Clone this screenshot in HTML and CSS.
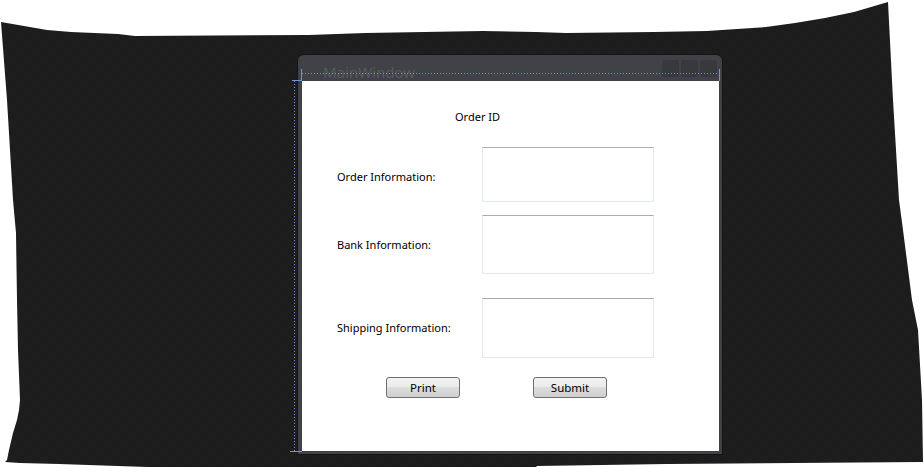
FILE: index.html
```html
<!DOCTYPE html>
<html>
<head>
<meta charset="utf-8">
<title>MainWindow</title>
<link rel="stylesheet" href="styles.css">
</head>
<body>
<div class="stage">
  <svg class="backdrop" width="924" height="467" viewBox="0 0 924 467">
    <defs>
      <pattern id="chk" width="16" height="16" patternUnits="userSpaceOnUse">
        <rect width="16" height="16" fill="#1c1c1c"/>
        <rect width="8" height="8" fill="#1e1e1e"/>
        <rect x="8" y="8" width="8" height="8" fill="#1e1e1e"/>
      </pattern>
    </defs>
    <polygon fill="url(#chk)" points="1,22 47,30 71,32 118,34 135,36 309,35 365,33 424,32 483,31 536,32 566,33 654,32 707,31 737,29 766,27 795,23 825,18 854,12 888,2 893,100 899,200 903,230 912,300 918,330 922,400 923,462 795,463 667,464 602,465 537,466 536,467 147,467 59,464 20,463 5,462 7,460 9,450 13,433 17,420 19,410 20,400 18,350 17,300 16,233 13,200 7,100"/>
  </svg>

  <div class="window">
    <div class="titlebar">
      <span class="title">MainWindow</span>
      <div class="caption-btns">
        <span class="cap"></span><span class="cap"></span><span class="cap"></span>
      </div>
    </div>
    <div class="client">
      <div class="order-id">Order ID</div>
      <div class="row row-order">
        <span class="label label-order">Order Information:</span>
        <div class="textbox tb-order"></div>
      </div>
      <div class="row row-bank">
        <span class="label">Bank Information:</span>
        <div class="textbox tb-bank"></div>
      </div>
      <div class="row row-ship">
        <span class="label">Shipping Information:</span>
        <div class="textbox tb-ship"></div>
      </div>
      <div class="buttons">
        <button class="btn btn-print">Print</button>
        <button class="btn btn-submit">Submit</button>
      </div>
    </div>
  </div>

  <div class="guide g-top-dotted"></div>
  <div class="guide g-tick-left"></div>
  <div class="guide g-tick-right"></div>
  <div class="guide g-left-top"></div>
  <div class="guide g-left-dotted"></div>
  <div class="guide g-left-bottom"></div>
</div>
</body>
</html>
```

FILE: styles.css
```css
html, body {
  margin: 0;
  padding: 0;
  background: #ffffff;
}

.stage {
  position: relative;
  width: 924px;
  height: 467px;
  overflow: hidden;
  box-sizing: border-box;
  padding: 54px 0 0 297px;
  font-family: "Noto Sans", "Open Sans", sans-serif;
}

.backdrop {
  position: absolute;
  left: 0;
  top: 0;
}

.window {
  position: relative;
  z-index: 1;
  width: 426px;
  height: 401px;
  box-sizing: border-box;
  border: 1px solid #141414;
  border-radius: 7px 7px 0 0;
  background: #414247;
  padding: 0 3px 3px 4px;
  display: flex;
  flex-direction: column;
}

.titlebar {
  height: 26px;
  flex: none;
  display: flex;
  align-items: flex-start;
  overflow: hidden;
}

.title {
  padding-left: 21px;
  padding-top: 7px;
  font-size: 15px;
  line-height: 20px;
  color: #58595e;
  font-family: "Noto Sans", sans-serif;
}

.caption-btns {
  margin-left: auto;
  margin-right: 2px;
  margin-top: 5px;
  display: flex;
  gap: 2px;
}

.cap {
  display: block;
  width: 17px;
  height: 17px;
  border-radius: 3px;
  background: #38393d;
}

.client {
  flex: 1;
  background: #ffffff;
  padding-left: 35px;
  color: #000000;
  font-size: 11px;
  display: flex;
  flex-direction: column;
  align-items: flex-start;
}

.order-id {
  margin-top: 28px;
  margin-left: 118px;
  line-height: 16px;
}

.row {
  display: flex;
  align-items: center;
}

.row-order { margin-top: 22px; }
.row-bank { margin-top: 13px; }
.row-ship { margin-top: 24px; }

.label {
  width: 145px;
  line-height: 16px;
}

.label-order {
  padding-top: 5px;
}

.textbox {
  width: 172px;
  box-sizing: border-box;
  border: 1px solid #e3e9ef;
  border-top-color: #abadb3;
  background: #ffffff;
}

.tb-order { height: 55px; }
.tb-bank { height: 59px; }
.tb-ship { height: 60px; }

.buttons {
  margin-top: 19px;
  display: flex;
}

.btn {
  width: 74px;
  height: 21px;
  box-sizing: border-box;
  border: 1px solid #707070;
  border-radius: 3px;
  background: linear-gradient(#f2f2f2 0%, #ebebeb 50%, #dddddd 50%, #cfcfcf 100%);
  font-family: "Noto Sans", "Open Sans", sans-serif;
  font-size: 11.5px;
  color: #000000;
  padding: 0;
  line-height: 18px;
}

.btn-print { margin-left: 49px; }
.btn-submit { margin-left: 73px; }

.guide {
  position: absolute;
  z-index: 2;
}

.g-top-dotted {
  left: 302px;
  top: 73px;
  width: 417px;
  height: 1px;
  background: repeating-linear-gradient(90deg, #6f95df 0 1px, transparent 1px 3px);
}

.g-tick-left {
  left: 301px;
  top: 69px;
  width: 1px;
  height: 12px;
  background: #6f95df;
}

.g-tick-right {
  left: 719px;
  top: 69px;
  width: 1px;
  height: 12px;
  background: #6f95df;
}

.g-left-top {
  left: 292px;
  top: 80px;
  width: 10px;
  height: 1px;
  background: #6f95df;
}

.g-left-dotted {
  left: 294px;
  top: 81px;
  width: 1px;
  height: 370px;
  background: repeating-linear-gradient(180deg, #6f95df 0 1px, transparent 1px 3px);
}

.g-left-bottom {
  left: 290px;
  top: 451px;
  width: 12px;
  height: 1px;
  background: #6f95df;
}
```
